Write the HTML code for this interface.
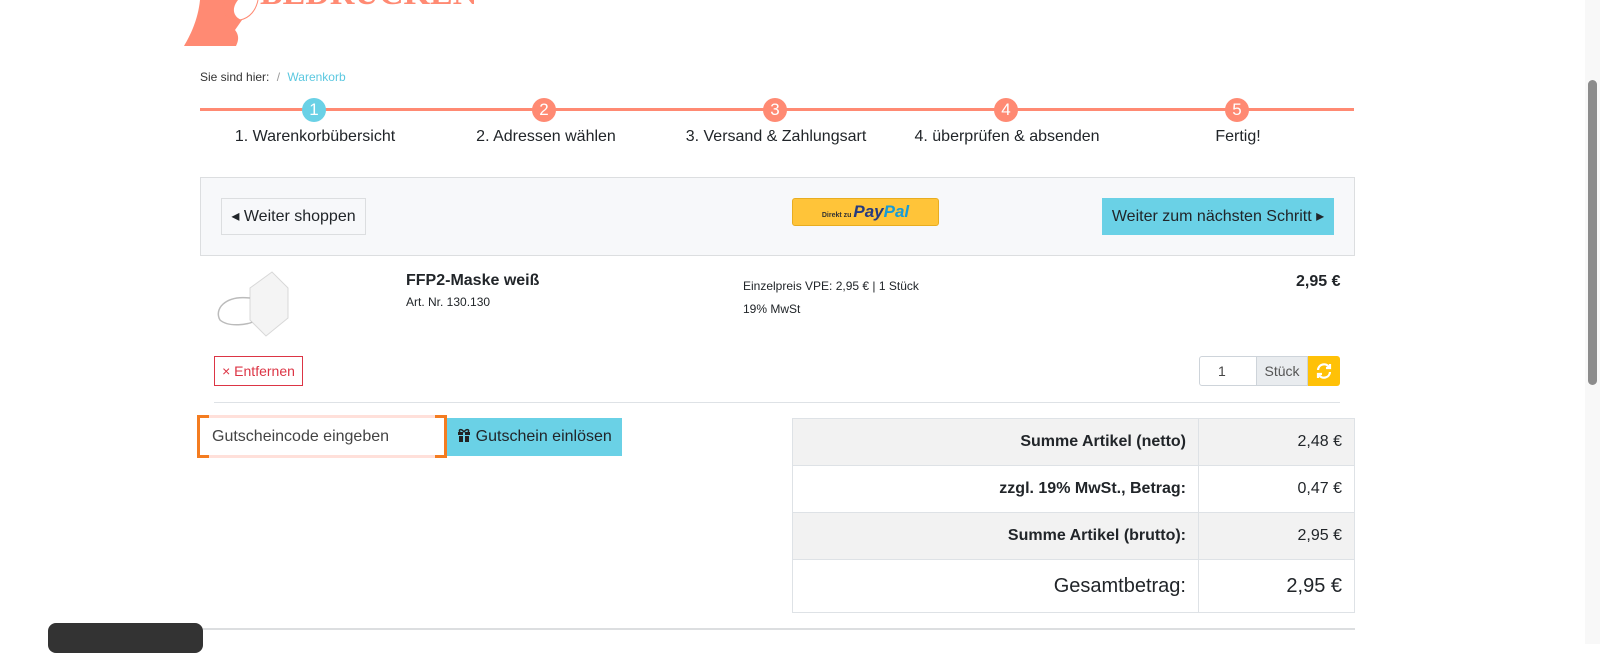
<!DOCTYPE html>
<html><head><meta charset="utf-8"><style>
*{box-sizing:border-box;margin:0;padding:0}
body{width:1600px;height:644px;overflow:hidden;background:#fff;font-family:"Liberation Sans",sans-serif;color:#212529;position:relative}
.a{position:absolute}
.step{position:absolute;top:98px;width:24px;height:24px;border-radius:50%;background:#ff8a73;color:#fff;font-size:17px;text-align:center;line-height:24px}
.lbl{position:absolute;top:128px;font-size:16px;width:230px;text-align:center}
td{border:1px solid #dee2e6;font-size:16px;padding:0 12px;text-align:right}
</style></head><body>
<svg class="a" style="left:180px;top:0" width="300" height="48">
<path d="M20 0 L58 0 C50 10 55 18 62 20 L55 30 C60 36 58 42 56 46 L4 46 C10 36 18 20 20 0Z" fill="#ff8a73"/>
<path d="M45 0 C40 10 45 20 60 20 C70 18 76 10 78 0" fill="none" stroke="#ff8a73" stroke-width="1"/>
<text x="80" y="4" font-family="Liberation Serif" font-weight="bold" font-size="34" fill="#ff8a73">BEDRUCKEN</text>
</svg>
<div class="a" style="left:200px;top:70px;font-size:12px;color:#333">Sie sind hier: <span style="color:#999;margin:0 4px">/</span> <span style="color:#5bc8e0">Warenkorb</span></div>
<div class="a" style="left:200px;top:108px;width:1154px;height:3px;background:#ff8a73"></div>
<div class="step" style="left:302px;background:#6ad1e6">1</div>
<div class="step" style="left:532px">2</div>
<div class="step" style="left:763px">3</div>
<div class="step" style="left:994px">4</div>
<div class="step" style="left:1225px">5</div>
<div class="lbl" style="left:200px">1. Warenkorbübersicht</div>
<div class="lbl" style="left:431px">2. Adressen wählen</div>
<div class="lbl" style="left:661px">3. Versand &amp; Zahlungsart</div>
<div class="lbl" style="left:892px">4. überprüfen &amp; absenden</div>
<div class="lbl" style="left:1123px">Fertig!</div>
<div class="a" style="left:200px;top:177px;width:1155px;height:79px;background:#f7f8fa;border:1px solid #dcdee0"></div>
<div class="a" style="left:221px;top:198px;width:145px;height:37px;border:1px solid #dcdee0;font-size:16px;line-height:35px;text-align:center">◂ Weiter shoppen</div>
<div class="a" style="left:792px;top:198px;width:147px;height:28px;background:#ffc439;border:1px solid #e8ad20;border-radius:3px;text-align:center;line-height:26px"><span style="font-size:7px;font-weight:bold;color:#333">Direkt zu </span><span style="font-size:17px;font-weight:bold;font-style:italic;color:#253b80">Pay<span style="color:#179bd7">Pal</span></span></div>
<div class="a" style="left:1102px;top:198px;width:232px;height:37px;background:#6ad1e6;font-size:16px;line-height:37px;text-align:center">Weiter zum nächsten Schritt ▸</div>
<svg class="a" style="left:214px;top:270px" width="80" height="70"><path d="M36 18 L58 2 L74 18 L74 48 L52 66 L36 50 Z" fill="#f4f4f4" stroke="#d8d8d8"/><path d="M36 28 C10 25 0 40 6 50 C15 58 36 54 38 52" fill="none" stroke="#bbb" stroke-width="1.5"/></svg>
<div class="a" style="left:406px;top:272px;font-size:16px;font-weight:bold">FFP2-Maske weiß</div>
<div class="a" style="left:406px;top:295px;font-size:12px">Art. Nr. 130.130</div>
<div class="a" style="left:743px;top:275px;font-size:12px;line-height:23px">Einzelpreis VPE: 2,95 € | 1 Stück<br>19% MwSt</div>
<div class="a" style="left:1296px;top:273px;font-size:16px;font-weight:bold">2,95 €</div>
<div class="a" style="left:214px;top:356px;width:89px;height:30px;border:1px solid #dc3545;color:#dc3545;font-size:14px;line-height:28px;text-align:center">× Entfernen</div>
<div class="a" style="left:1199px;top:356px;width:58px;height:30px;border:1px solid #ced4da;border-radius:3px 0 0 3px;font-size:14px;line-height:28px;padding-left:18px;color:#444">1</div>
<div class="a" style="left:1256px;top:356px;width:52px;height:30px;background:#e9ecef;border:1px solid #ced4da;font-size:14px;line-height:28px;text-align:center;color:#555">Stück</div>
<div class="a" style="left:1308px;top:356px;width:32px;height:30px;background:#ffc107;border-radius:0 3px 3px 0"><svg width="32" height="30"><path d="M10 14 A6 6 0 0 1 21 11 M22 8 L22 12 L18 12 M22 16 A6 6 0 0 1 11 19 M10 22 L10 18 L14 18" fill="none" stroke="#fff" stroke-width="2.2"/></svg></div>
<div class="a" style="left:214px;top:402px;width:1126px;height:1px;background:#dee2e6"></div>
<div class="a" style="left:197px;top:415px;width:250px;height:43px;border:3px solid #ffe0da"></div>
<div class="a" style="left:197px;top:415px;width:12px;height:43px;border:3px solid #f47c20;border-right:0"></div>
<div class="a" style="left:435px;top:415px;width:12px;height:43px;border:3px solid #f47c20;border-left:0"></div>
<div class="a" style="left:212px;top:428px;font-size:16px;color:#444">Gutscheincode eingeben</div>
<div class="a" style="left:447px;top:418px;width:175px;height:38px;background:#6ad1e6;font-size:16px;line-height:38px;text-align:center"><svg width="14" height="14" style="vertical-align:-1px"><rect x="1" y="4" width="12" height="3" fill="#222"/><rect x="2" y="8" width="10" height="6" fill="#222"/><rect x="6" y="4" width="2" height="10" fill="#6ad1e6"/><path d="M7 4 C4 0 1 2 3 4 M7 4 C10 0 13 2 11 4" fill="none" stroke="#222" stroke-width="1.5"/></svg> Gutschein einlösen</div>
<table class="a" style="left:792px;top:418px;width:563px;border-collapse:collapse">
<tr style="height:47px;background:#f2f2f2"><td style="width:406px;font-weight:bold">Summe Artikel (netto)</td><td>2,48 €</td></tr>
<tr style="height:47px"><td style="font-weight:bold">zzgl. 19% MwSt., Betrag:</td><td>0,47 €</td></tr>
<tr style="height:47px;background:#f2f2f2"><td style="font-weight:bold">Summe Artikel (brutto):</td><td>2,95 €</td></tr>
<tr style="height:53px"><td style="font-size:20px">Gesamtbetrag:</td><td style="font-size:20px">2,95 €</td></tr>
</table>
<div class="a" style="left:203px;top:628px;width:1152px;height:2px;background:#dcdee0"></div>
<div class="a" style="left:48px;top:623px;width:155px;height:30px;background:#333;border-radius:8px"></div>
<div class="a" style="left:1585px;top:0;width:15px;height:644px;background:#f8f8f8"></div>
<div class="a" style="left:1588px;top:80px;width:9px;height:305px;background:#8c8c8c;border-radius:5px"></div>
</body></html>
